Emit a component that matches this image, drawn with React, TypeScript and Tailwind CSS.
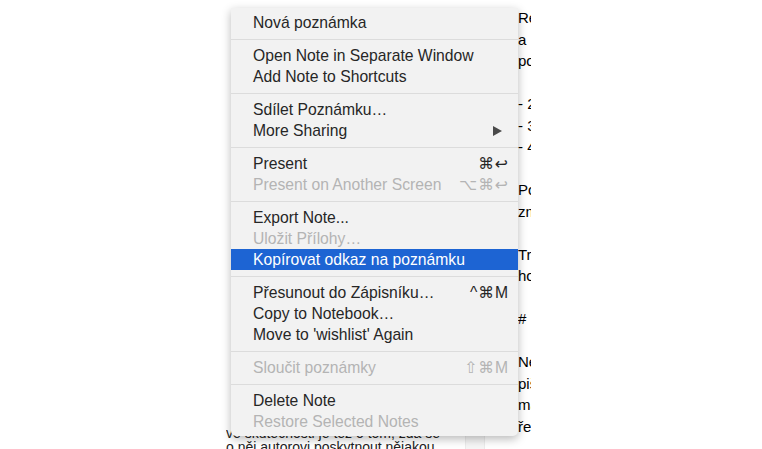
import React from "react"

type Item =
  | { kind: "sep" }
  | { kind: "item"; label: string; shortcut?: string; disabled?: boolean; active?: boolean; submenu?: boolean }

const items: Item[] = [
  { kind: "item", label: "Nová poznámka" },
  { kind: "sep" },
  { kind: "item", label: "Open Note in Separate Window" },
  { kind: "item", label: "Add Note to Shortcuts" },
  { kind: "sep" },
  { kind: "item", label: "Sdílet Poznámku…" },
  { kind: "item", label: "More Sharing", submenu: true },
  { kind: "sep" },
  { kind: "item", label: "Present", shortcut: "⌘↩" },
  { kind: "item", label: "Present on Another Screen", shortcut: "⌥⌘↩", disabled: true },
  { kind: "sep" },
  { kind: "item", label: "Export Note..." },
  { kind: "item", label: "Uložit Přílohy…", disabled: true },
  { kind: "item", label: "Kopírovat odkaz na poznámku", active: true },
  { kind: "sep" },
  { kind: "item", label: "Přesunout do Zápisníku…", shortcut: "^⌘M" },
  { kind: "item", label: "Copy to Notebook…" },
  { kind: "item", label: "Move to 'wishlist' Again" },
  { kind: "sep" },
  { kind: "item", label: "Sloučit poznámky", shortcut: "⇧⌘M", disabled: true },
  { kind: "sep" },
  { kind: "item", label: "Delete Note" },
  { kind: "item", label: "Restore Selected Notes", disabled: true },
]

// note text behind the menu, one entry per line ("" = blank line)
const noteLines = [
  "Recenze",
  "a",
  "pokud",
  "",
  "- 2",
  "- 3",
  "- 4",
  "",
  "Pokud",
  "zmínit",
  "",
  "Tren",
  "hodnota",
  "",
  "#",
  "",
  "Nejen",
  "pište",
  "max",
  "řešte",
]

function MenuRow({ item }: { item: Item }) {
  if (item.kind === "sep") {
    return (
      <div className="h-[12px] flex items-center">
        <div className="h-px w-full bg-[#dcdcdc]" />
      </div>
    )
  }
  const color = item.active ? "text-white" : item.disabled ? "text-[#b4b4b4]" : "text-[#262626]"
  return (
    <div
      className={`h-[21px] flex items-center justify-between pl-[22px] pr-[9px] ${color} ${
        item.active ? "bg-[#1d64d3]" : ""
      }`}
    >
      <span>{item.label}</span>
      {item.shortcut && <span className="tracking-[1px]">{item.shortcut}</span>}
      {item.submenu && (
        <svg width="9" height="10" viewBox="0 0 9 10" className="mr-[7px]">
          <path d="M0 0 L9 5 L0 10 Z" fill="#4a4a4a" />
        </svg>
      )}
    </div>
  )
}

export default function App() {
  return (
    <div
      className="relative w-[762px] h-[449px] overflow-hidden bg-white"
      style={{ fontFamily: '"Helvetica Neue", "Liberation Sans", "DejaVu Sans", sans-serif' }}
    >
      {/* document behind the menu */}
      <div className="flex h-full pl-[226px]">
        <div className="w-[239px] pt-[426px] overflow-hidden text-[#222] text-[14px] leading-[14px]">
          <div className="whitespace-nowrap">ve skutečnosti je též o tom, zda se</div>
          <div className="whitespace-nowrap">o něj autorovi poskytnout nějakou</div>
        </div>
        <div className="w-[20px] self-end h-[30px] bg-[#f6f6f6] border-x border-[#ececec]" />
        <div className="ml-[33px] w-[13px] pt-[7px] overflow-hidden text-black text-[15px] leading-[21.5px]">
          {noteLines.map((l, i) => (
            <div key={i} className="h-[21.5px] whitespace-nowrap">
              {l}
            </div>
          ))}
        </div>
      </div>

      {/* context menu */}
      <div className="absolute left-[231px] top-[8px] w-[287px] py-[4px] bg-[#f2f2f2] rounded-b-[5px] shadow-[0_3px_10px_rgba(0,0,0,0.28)] text-[15.7px]">
        {items.map((it, i) => (
          <MenuRow key={i} item={it} />
        ))}
      </div>
    </div>
  )
}
